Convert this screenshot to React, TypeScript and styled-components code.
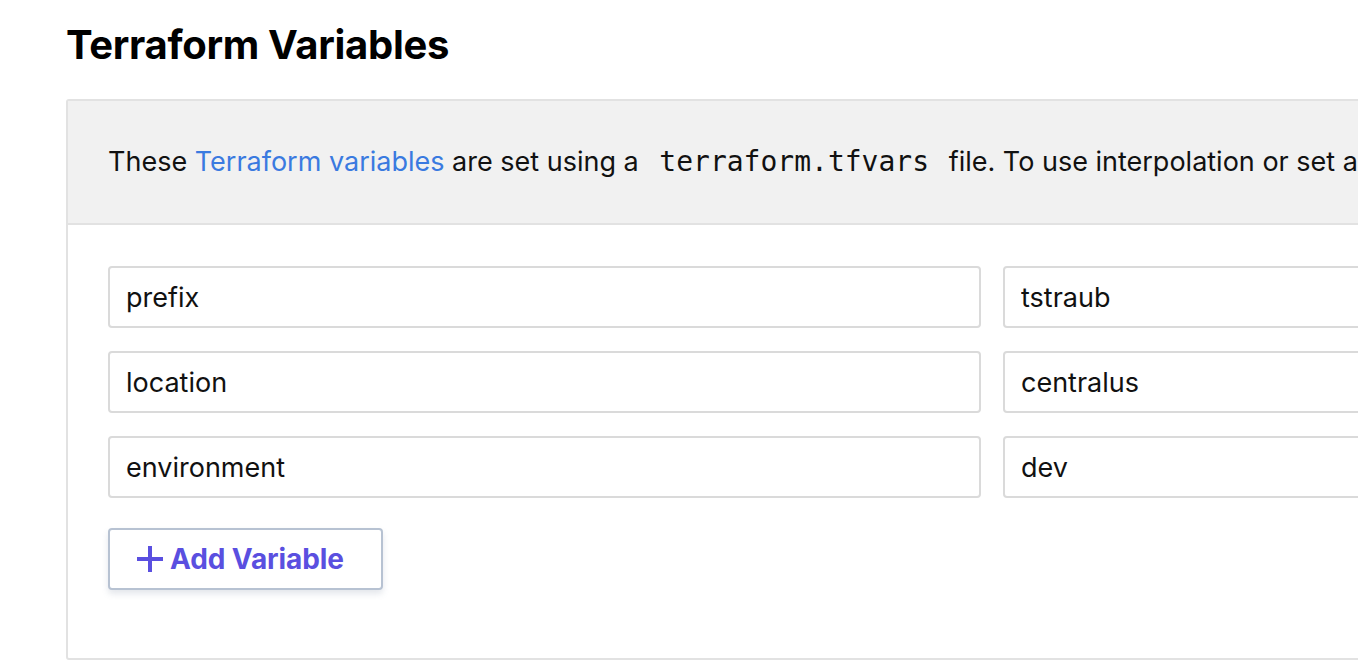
import React from "react";
import styled, { createGlobalStyle } from "styled-components";

const GlobalStyle = createGlobalStyle`
	html, body {
		margin: 0;
		padding: 0;
		background: #ffffff;
		overflow: hidden;
	}
	body {
		font-family: Inter, "Noto Sans", sans-serif;
		color: #111111;
	}
	* {
		box-sizing: border-box;
	}
`;

const variables = [
	{ name: "prefix", value: "tstraub" },
	{ name: "location", value: "centralus" },
	{ name: "environment", value: "dev" },
];

const PlusIcon = () => (
	<svg width="28" height="28" viewBox="0 0 28 28" aria-hidden="true">
		<path d="M14 1v26M1 14h26" stroke="currentColor" strokeWidth="4" />
	</svg>
);

export default function App() {
	return (
		<>
			<GlobalStyle />
			<Page>
				<Title>Terraform Variables</Title>
				<Card>
					<CardHeader>
						<Intro>
							These <Link href="#">Terraform variables</Link> are set using a{" "}
							<Code>terraform.tfvars</Code> file. To use interpolation or set any
							other variables, use the main Terraform configuration.
						</Intro>
					</CardHeader>
					<CardBody>
						{variables.map((v) => (
							<VarRow key={v.name}>
								<Field defaultValue={v.name} />
								<Field defaultValue={v.value} />
							</VarRow>
						))}
						<AddButton type="button">
							<PlusIcon />
							Add Variable
						</AddButton>
					</CardBody>
				</Card>
			</Page>
		</>
	);
}

const Page = styled.div`
	padding: 22px 0 0 66px;
	width: 2000px;
`;

const Title = styled.h1`
	margin: 0 0 31px;
	font-size: 40px;
	font-weight: 700;
	line-height: 46px;
	letter-spacing: -0.3px;
	color: #000;
`;

const Card = styled.section`
	width: 1852px;
	border: 2px solid #e2e2e2;
	border-radius: 3px;
	background: #fff;
`;

const CardHeader = styled.div`
	background: #f1f1f1;
	border-bottom: 2px solid #e2e2e2;
	height: 124px;
	display: flex;
	align-items: center;
	padding: 0 40px;
`;

const Intro = styled.p`
	margin: 0;
	font-size: 27px;
	line-height: 34px;
	white-space: nowrap;
	color: #111;
`;

const Link = styled.a`
	color: #3a7ae0;
	text-decoration: none;
`;

const Code = styled.code`
	font-family: "DejaVu Sans Mono", "Liberation Mono", monospace;
	font-size: 28px;
	padding: 0 12px 0 13px;
	color: #111;
`;

const CardBody = styled.div`
	padding: 41px 40px 68px;
	display: flex;
	flex-direction: column;
	align-items: flex-start;
`;

const VarRow = styled.div`
	display: grid;
	grid-template-columns: 873px 873px;
	gap: 22px;
	margin-bottom: 23px;
`;

const Field = styled.input`
	height: 62px;
	border: 2px solid #dadada;
	border-radius: 4px;
	padding: 0 16px;
	font-family: Inter, "Noto Sans", sans-serif;
	font-size: 27px;
	color: #111;
	background: #fff;
	outline: none;
`;

const AddButton = styled.button`
	margin-top: 7px;
	height: 62px;
	width: 275px;
	display: flex;
	align-items: center;
	gap: 6px;
	padding: 0 0 0 26px;
	border: 2px solid #b7c2d2;
	border-radius: 4px;
	background: #fff;
	box-shadow: 0 4px 6px rgba(120, 135, 160, 0.2);
	color: #5a4fe0;
	font-family: Inter, "Noto Sans", sans-serif;
	font-size: 28px;
	font-weight: 700;
	letter-spacing: -0.1px;
	cursor: pointer;
`;
